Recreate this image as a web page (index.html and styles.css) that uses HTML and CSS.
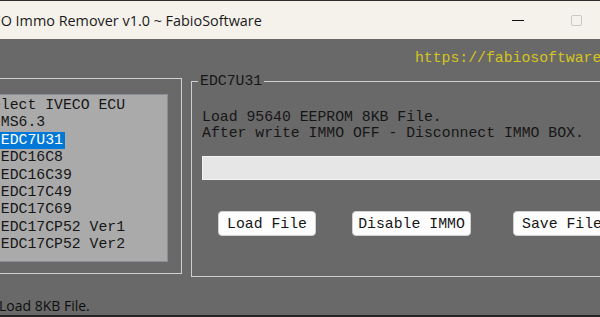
FILE: index.html
```html
<!DOCTYPE html>
<html lang="en">
<head>
  <meta charset="UTF-8" />
  <title>IVECO Immo Remover v1.0 ~ FabioSoftware</title>
  <link rel="stylesheet" href="styles.css">
</head>
<body>
  <div class="window">
    <div class="titlebar">
      <span class="title">IVECO Immo Remover v1.0 ~ FabioSoftware</span>
      <div class="controls">
        <span class="ctl"><span class="min"></span></span>
        <span class="ctl"><span class="max"></span></span>
        <span class="ctl"></span>
      </div>
    </div>

    <div class="client">
      <div class="url">https://fabiosoftware.it</div>

      <div class="panels">
        <div class="group ecu-group">
          <div class="listbox">
            <div class="item">Select IVECO ECU</div>
            <div class="item">  MS6.3</div>
            <div class="item"><span class="selected">  EDC7U31</span></div>
            <div class="item">  EDC16C8</div>
            <div class="item">  EDC16C39</div>
            <div class="item">  EDC17C49</div>
            <div class="item">  EDC17C69</div>
            <div class="item">  EDC17CP52 Ver1</div>
            <div class="item">  EDC17CP52 Ver2</div>
          </div>
        </div>

        <fieldset class="group info-group">
          <legend>EDC7U31</legend>
          <p class="info">Load 95640 EEPROM 8KB File.<br>After write IMMO OFF - Disconnect IMMO BOX.</p>
          <div class="progress"></div>
          <div class="buttons">
            <button type="button" class="btn btn-load">Load File</button>
            <button type="button" class="btn btn-immo">Disable IMMO</button>
            <button type="button" class="btn btn-save">Save File</button>
          </div>
        </fieldset>
      </div>

      <div class="status">Load 8KB File.</div>
    </div>
  </div>
</body>
</html>
```

FILE: styles.css
```css
:root {
  --client: #696969;
  --titlebar: #f5f2eb;
  --line: #cfcfcf;
  --text: #161616;
  --mono: 'Liberation Mono', 'DejaVu Sans Mono', monospace;
}

body {
  margin: 0;
  overflow: hidden;
  background: var(--client);
}

.window {
  width: 703px;
  margin-left: -40px;
  border-top: 1px solid #2e2e2e;
  border-bottom: 2px solid #262626;
}

.titlebar {
  height: 38px;
  display: flex;
  align-items: center;
  background: var(--titlebar);
  font-family: 'Segoe UI', 'Open Sans', sans-serif;
  font-size: 14.4px;
  color: #1b1b1b;
}

.title {
  padding-left: 11px;
  padding-top: 1px;
}

.controls {
  margin-left: auto;
  display: flex;
  height: 100%;
}

.ctl {
  width: 58px;
  display: flex;
  align-items: center;
  justify-content: center;
}

.min {
  width: 12px;
  height: 1px;
  background: #111;
}

.max {
  width: 9px;
  height: 9px;
  border: 1px solid #c9c9c9;
  border-radius: 2px;
}

.client {
  height: 276px;
  display: flex;
  flex-direction: column;
  background: var(--client);
  font-family: var(--mono);
  font-size: 14.8px;
  color: var(--text);
}

.url {
  display: flex;
  justify-content: flex-end;
  padding: 11px 35px 0 0;
  line-height: 17px;
  color: #d6c51c;
}

.panels {
  display: flex;
  align-items: flex-start;
  margin-top: 5px;
  padding-left: 8px;
}

.group {
  border: 1px solid var(--line);
  box-sizing: border-box;
}

.ecu-group {
  width: 214px;
  height: 196px;
  margin-top: 6px;
  padding: 15px 0 0 11px;
}

.listbox {
  width: 188px;
  height: 168px;
  box-sizing: border-box;
  padding: 2px 0 0 2px;
  background: #aaaaaa;
  border: 1px solid #8a8e96;
  overflow: hidden;
}

.item {
  line-height: 17.4px;
  white-space: pre;
}

.selected {
  display: inline-block;
  padding-right: 2px;
  background: #0078d7;
  color: #fff;
}

.info-group {
  flex: 1;
  height: 204px;
  margin: 1px 0 0 9px;
  padding: 19px 0 0 10px;
  min-width: 0;
}

.info-group legend {
  margin-left: -4px;
  padding: 0 2px;
  line-height: 17px;
}

.info {
  margin: 0;
  line-height: 16px;
}

.progress {
  height: 24px;
  margin-top: 15px;
  box-sizing: border-box;
  border: 1px solid #f2f2f2;
  background: #e6e6e6;
}

.buttons {
  display: flex;
  margin-top: 31px;
  padding-left: 16px;
}

.btn {
  height: 25px;
  padding: 0;
  font-family: var(--mono);
  font-size: 14.8px;
  color: var(--text);
  background: #fdfdfd;
  border: 1px solid #d0d0d0;
  border-radius: 4px;
}

.btn-load { width: 98px; }
.btn-immo { width: 119px; margin-left: 36px; }
.btn-save { width: 98px; margin-left: 42px; }

.status {
  margin-top: 19px;
  padding-left: 39px;
  line-height: 20px;
  font-family: 'Segoe UI', 'Open Sans', sans-serif;
  font-size: 14px;
  color: #0f0f0f;
}
```
